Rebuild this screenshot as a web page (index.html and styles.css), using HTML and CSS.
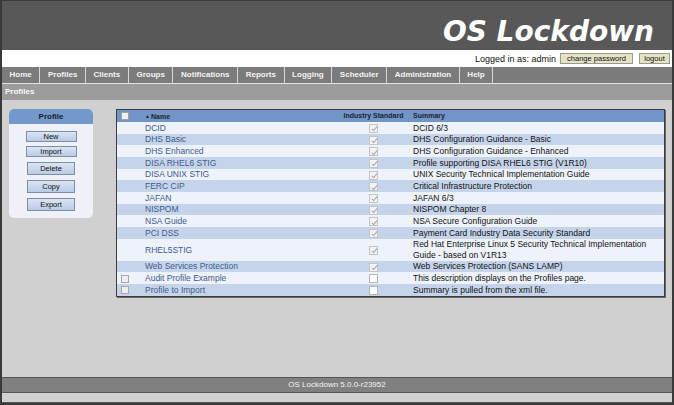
FILE: index.html
```html
<!DOCTYPE html>
<html>
<head>
<meta charset="utf-8">
<link rel="stylesheet" href="styles.css">
</head>
<body>
<div class="page">
  <div class="header"><span class="title">OS Lockdown</span></div>
  <div class="userbar">
    <span class="logged">Logged in as: admin</span>
    <span class="ubtn pw">change password</span>
    <span class="ubtn lo">logout</span>
  </div>
  <div class="nav">
    <span class="navitem">Home</span><span class="navitem">Profiles</span><span class="navitem">Clients</span><span class="navitem">Groups</span><span class="navitem">Notifications</span><span class="navitem">Reports</span><span class="navitem">Logging</span><span class="navitem">Scheduler</span><span class="navitem">Administration</span><span class="navitem">Help</span>
  </div>
  <div class="subbar">Profiles</div>
  <div class="content">
    <div class="sidebar">
      <div class="side-head">Profile</div>
      <div class="side-body">
        <span class="sbtn wide">New</span>
        <span class="sbtn wide">Import</span>
        <span class="sbtn tall">Delete</span>
        <span class="sbtn tall">Copy</span>
        <span class="sbtn tall">Export</span>
      </div>
    </div>
    <div class="tablewrap">
      <table class="grid">
        <colgroup><col class="c1"><col class="c2"><col class="c3"><col class="c4"></colgroup>
        <thead>
          <tr><th><span class="cb hcb"></span></th><th class="namehd"><span class="tri">▲</span>Name</th><th class="center">Industry Standard</th><th>Summary</th></tr>
        </thead>
        <tbody>
          <tr><td></td><td class="nm">DCID</td><td class="center"><span class="cb chk"></span></td><td>DCID 6/3</td></tr>
          <tr><td></td><td class="nm">DHS Basic</td><td class="center"><span class="cb chk"></span></td><td>DHS Configuration Guidance - Basic</td></tr>
          <tr><td></td><td class="nm">DHS Enhanced</td><td class="center"><span class="cb chk"></span></td><td>DHS Configuration Guidance - Enhanced</td></tr>
          <tr><td></td><td class="nm">DISA RHEL6 STIG</td><td class="center"><span class="cb chk"></span></td><td>Profile supporting DISA RHEL6 STIG (V1R10)</td></tr>
          <tr><td></td><td class="nm">DISA UNIX STIG</td><td class="center"><span class="cb chk"></span></td><td>UNIX Security Technical Implementation Guide</td></tr>
          <tr><td></td><td class="nm">FERC CIP</td><td class="center"><span class="cb chk"></span></td><td>Critical Infrastructure Protection</td></tr>
          <tr><td></td><td class="nm">JAFAN</td><td class="center"><span class="cb chk"></span></td><td>JAFAN 6/3</td></tr>
          <tr><td></td><td class="nm">NISPOM</td><td class="center"><span class="cb chk"></span></td><td>NISPOM Chapter 8</td></tr>
          <tr><td></td><td class="nm">NSA Guide</td><td class="center"><span class="cb chk"></span></td><td>NSA Secure Configuration Guide</td></tr>
          <tr><td></td><td class="nm">PCI DSS</td><td class="center"><span class="cb chk"></span></td><td>Payment Card Industry Data Security Standard</td></tr>
          <tr><td></td><td class="nm">RHEL5STIG</td><td class="center"><span class="cb chk"></span></td><td>Red Hat Enterprise Linux 5 Security Technical Implementation Guide - based on V1R13</td></tr>
          <tr><td></td><td class="nm">Web Services Protection</td><td class="center"><span class="cb chk"></span></td><td>Web Services Protection (SANS LAMP)</td></tr>
          <tr><td><span class="cb gray"></span></td><td class="nm">Audit Profile Example</td><td class="center"><span class="cb"></span></td><td>This description displays on the Profiles page.</td></tr>
          <tr><td><span class="cb gray"></span></td><td class="nm">Profile to Import</td><td class="center"><span class="cb"></span></td><td>Summary is pulled from the xml file.</td></tr>
        </tbody>
      </table>
    </div>
  </div>
  <div class="footer">OS Lockdown 5.0.0-r23952</div>
  <div class="bottombar"></div>
</div>
</body>
</html>
```

FILE: styles.css
```css
* { box-sizing: border-box; }
html, body { margin: 0; padding: 0; }
body {
  font-family: "Liberation Sans", Arial, sans-serif;
  background: #d0d0d0;
}
.page {
  width: 674px;
  height: 405px;
  border: 2px solid #3a3a3a;
  border-top-width: 1px;
  display: flex;
  flex-direction: column;
  background: #d0d0d0;
}
.header {
  height: 49px;
  background: #585858;
  display: flex;
  justify-content: flex-end;
  align-items: flex-end;
  padding: 0 18px 1px 0;
}
.title {
  font-family: "DejaVu Sans", Verdana, sans-serif;
  font-weight: bold;
  font-style: italic;
  font-size: 28px;
  color: #ffffff;
  line-height: 34px;
}
.userbar {
  height: 17px;
  background: #ffffff;
  display: flex;
  justify-content: flex-end;
  align-items: center;
  padding-right: 2px;
  font-size: 9px;
  color: #111;
}
.logged { margin-right: 4px; }
.ubtn {
  background: #e6e2c6;
  border: 1px solid #9a9a88;
  font-size: 7.5px;
  height: 11px;
  line-height: 9px;
  display: inline-flex;
  align-items: center;
  justify-content: center;
  color: #111;
}
.pw { width: 73px; margin-right: 6px; }
.lo { width: 31px; }
.nav {
  height: 17px;
  background: #7b7b7b;
  border-bottom: 1px solid #e2e2e2;
  display: flex;
}
.navitem {
  color: #f4f4f4;
  font-weight: bold;
  font-size: 8px;
  line-height: 16px;
  padding: 0 7.6px;
  border-right: 1.5px solid #d6d6d6;
}
.subbar {
  height: 16px;
  background: #9c9c9c;
  color: #f8f8f8;
  font-weight: bold;
  font-size: 8px;
  line-height: 16px;
  padding-left: 3px;
}
.content {
  flex: 1;
  display: flex;
  align-items: flex-start;
  padding: 9px 0 0 7px;
}
.sidebar {
  width: 84px;
  background: #eef1f8;
  border-radius: 5px;
  overflow: hidden;
}
.side-head {
  height: 15px;
  background: #7399cb;
  text-align: center;
  font-weight: bold;
  font-size: 8px;
  line-height: 15px;
  color: #1a1f2a;
}
.side-body {
  display: flex;
  flex-direction: column;
  align-items: center;
  padding: 7px 0 7px;
  gap: 4px;
}
.sbtn {
  display: flex;
  align-items: center;
  justify-content: center;
  font-size: 7.5px;
  color: #111;
  background: linear-gradient(#dbe5f3, #b9cbe4);
  border: 1px solid #7f8ea6;
}
.sbtn.wide { width: 51px; height: 11px; }
.sbtn.tall { width: 48px; height: 13px; margin-top: 1px; }
.tablewrap {
  margin-left: 23px;
  width: 549px;
  border: 1px solid #3c3c3c;
  box-shadow: 1px 1px 0 #6a6a6a;
  background: #eef2fa;
}
.grid {
  width: 100%;
  border-collapse: collapse;
  table-layout: fixed;
  font-size: 8.5px;
}
.c1 { width: 24px; }
.c2 { width: 197px; }
.c3 { width: 71px; }
.grid th {
  background: #7095c6;
  color: #1b2433;
  font-size: 7px;
  font-weight: bold;
  text-align: left;
  height: 12px;
  padding: 0 0 0 4px;
  line-height: 10px;
}
.grid th.center { text-align: center; padding: 0; }
.tri { font-size: 5px; margin-right: 1px; vertical-align: 1px; }
.grid td {
  padding: 0.7px 0 0.7px 4px;
  line-height: 10.3px;
  color: #121212;
  vertical-align: middle;
}
.grid td.center { text-align: center; padding: 0; }
.grid tbody tr:nth-child(odd) td { background: #eef2fa; }
.grid tbody tr:nth-child(even) td { background: #c5d4ea; }
.grid td.nm { color: #3f5c8c; }
.cb {
  display: inline-block;
  width: 9px;
  height: 9px;
  border: 1px solid #b4b4b4;
  background: #ffffff;
  vertical-align: middle;
  position: relative;
}
.hcb { width: 8px; height: 8px; background: #f0f0f0; border-color: #a0a0a0; }
.gray { width: 8px; height: 8px; background: #eeeeee; border-color: #a8a8a8; }
.chk { background: #f3f3f3; border-color: #c4c4c4; }
.chk::after {
  content: "";
  position: absolute;
  left: 2.5px;
  top: 0.5px;
  width: 2px;
  height: 5px;
  border-right: 1px solid #a8a8a8;
  border-bottom: 1px solid #a8a8a8;
  transform: rotate(40deg);
}
.footer {
  height: 16px;
  background: #808080;
  border-top: 1px solid #555;
  border-bottom: 1px solid #555;
  color: #f4f4f4;
  font-size: 8px;
  line-height: 14px;
  text-align: center;
}
.bottombar {
  height: 10px;
  background: #d0d0d0;
  border-bottom: 1px solid #555;
}
```
